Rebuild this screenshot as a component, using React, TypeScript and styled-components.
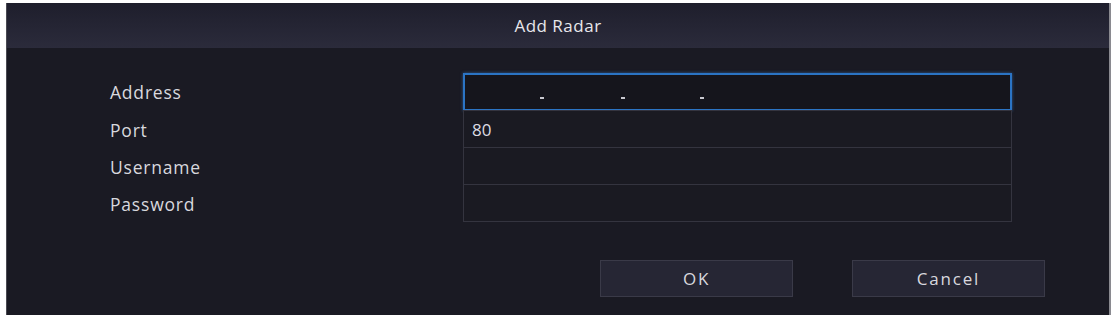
import React from "react";
import styled, { createGlobalStyle } from "styled-components";

const Global = createGlobalStyle`
  html, body { margin: 0; padding: 0; background: #ffffff; }
  body { font-family: "Open Sans", "Noto Sans", "DejaVu Sans", sans-serif; }
`;

const Page = styled.div`
  padding: 3px 3px 0 6px;
  width: 1114px;
  height: 315px;
  box-sizing: border-box;
`;

const Dialog = styled.div`
  height: 312px;
  background: #1a1a23;
  border-left: 1px solid #4a4a52;
  border-right: 2px solid #8a8a90;
  box-sizing: border-box;
  display: flex;
  flex-direction: column;
`;

const Header = styled.div`
  height: 45px;
  background: linear-gradient(#1e1e2c, #2b2b3b);
  display: flex;
  align-items: center;
  justify-content: center;
  color: #e8e8ec;
  font-size: 17px;
  letter-spacing: 0.5px;
`;

const Form = styled.div`
  display: grid;
  grid-template-columns: 353px 549px;
  padding: 25px 0 0 103px;
`;

const Label = styled.div<{ $h: number }>`
  display: flex;
  align-items: center;
  color: #d8d8de;
  font-size: 17.5px;
  letter-spacing: 0.8px;
  height: ${(p) => p.$h}px;
`;

const Field = styled.div<{ $active?: boolean; $h: number }>`
  box-sizing: border-box;
  height: ${(p) => p.$h}px;
  margin-top: ${(p) => (p.$active ? 0 : -1)}px;
  border: ${(p) => (p.$active ? "2px solid #2b74c4" : "1px solid #34343f")};
  box-shadow: ${(p) => (p.$active ? "0 0 3px rgba(60,130,210,0.6)" : "none")};
  background: ${(p) => (p.$active ? "#15151c" : "#1a1a22")};
  display: flex;
  align-items: center;
  padding-left: 8px;
  color: #dcdce2;
  font-size: 17px;
  position: relative;
`;

const Dot = styled.span`
  position: absolute;
  top: 22px;
  width: 4px;
  height: 2px;
  background: #c8c8d0;
`;

const Buttons = styled.div`
  display: flex;
  gap: 59px;
  padding: 38px 0 0 593px;
`;

const Button = styled.button`
  width: 193px;
  height: 37px;
  background: #262634;
  border: 1px solid #3a3a48;
  color: #d8d8de;
  font-family: "Open Sans", "Noto Sans", sans-serif;
  font-size: 17px;
  letter-spacing: 1.8px;
  padding: 0;
`;

const rows = [
  { label: "Address", h: 38, active: true, value: "" },
  { label: "Port", h: 38, value: "80" },
  { label: "Username", h: 38, value: "" },
  { label: "Password", h: 38, value: "" },
];

export default function App() {
  return (
    <Page>
      <Global />
      <Dialog>
        <Header>Add Radar</Header>
        <Form>
          {rows.map((r) => (
            <React.Fragment key={r.label}>
              <Label $h={r.active ? r.h : r.h - 1}>{r.label}</Label>
              <Field $active={r.active} $h={r.h}>
                {r.active ? (
                  <>
                    <Dot style={{ left: 75 }} />
                    <Dot style={{ left: 156 }} />
                    <Dot style={{ left: 235 }} />
                  </>
                ) : (
                  r.value
                )}
              </Field>
            </React.Fragment>
          ))}
        </Form>
        <Buttons>
          <Button>OK</Button>
          <Button>Cancel</Button>
        </Buttons>
      </Dialog>
    </Page>
  );
}
